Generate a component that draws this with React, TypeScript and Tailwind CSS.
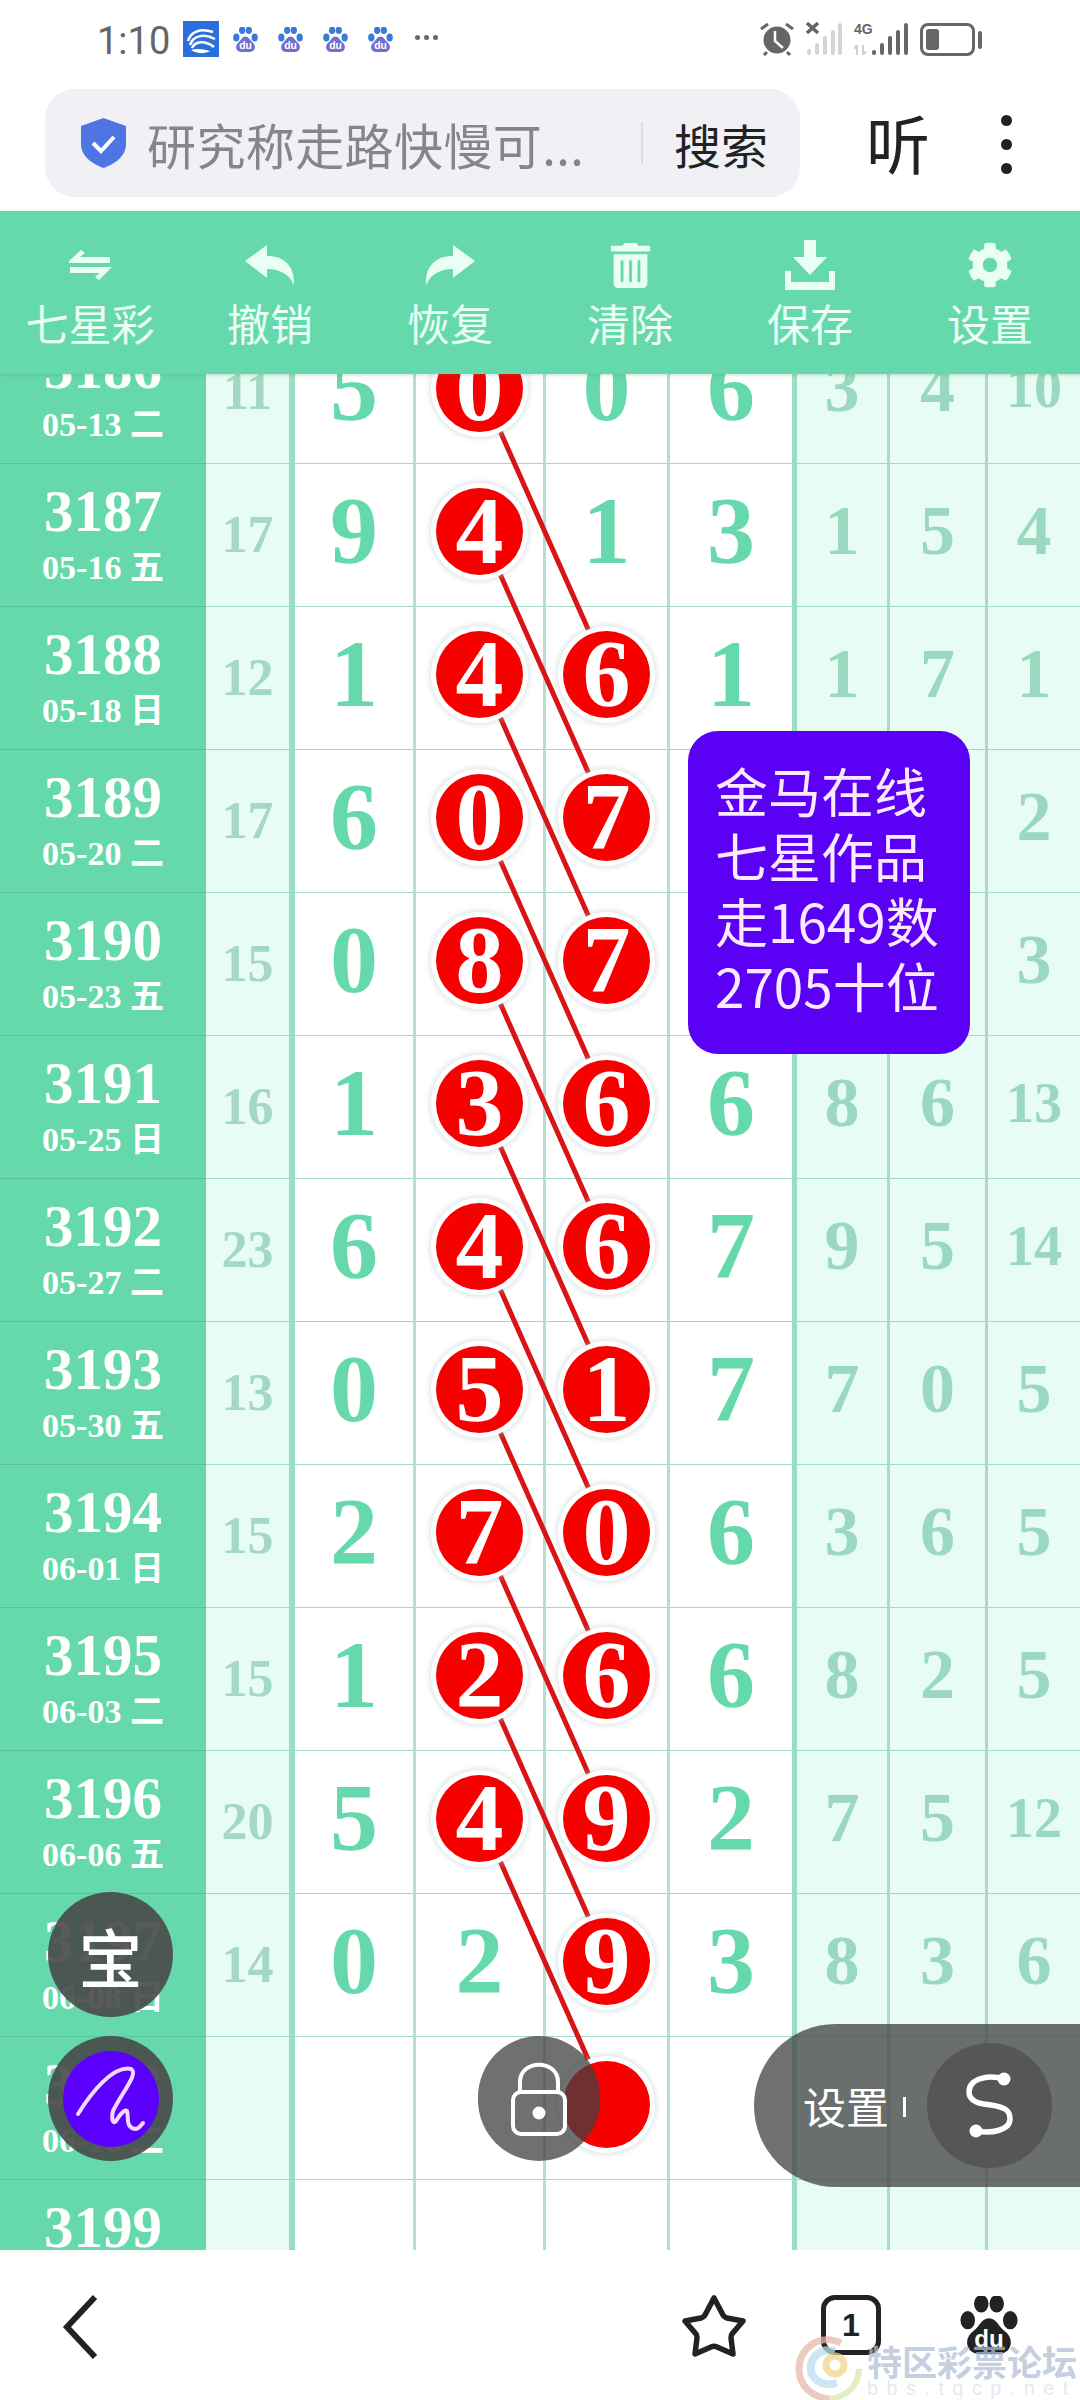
import React from 'react';
import { FaTrashAlt, FaCog } from 'react-icons/fa';

const serif = "font-['Liberation_Serif','Noto_Sans_CJK_SC',serif]";
const ROW_H = 143;
const BALL_OFFSET = 67;

// cells: first, second, third, fourth; a leading "o" marks a drawn ball
const rows = [
  { no: 3186, date: '05-13 二', sum: 11, cells: ['5', 'o0', '0', '6'], tail: [3, 4, 10] },
  { no: 3187, date: '05-16 五', sum: 17, cells: ['9', 'o4', '1', '3'], tail: [1, 5, 4] },
  { no: 3188, date: '05-18 日', sum: 12, cells: ['1', 'o4', 'o6', '1'], tail: [1, 7, 1], thick: true },
  { no: 3189, date: '05-20 二', sum: 17, cells: ['6', 'o0', 'o7', ''], tail: ['', '', 2] },
  { no: 3190, date: '05-23 五', sum: 15, cells: ['0', 'o8', 'o7', ''], tail: ['', '', 3] },
  { no: 3191, date: '05-25 日', sum: 16, cells: ['1', 'o3', 'o6', '6'], tail: [8, 6, 13] },
  { no: 3192, date: '05-27 二', sum: 23, cells: ['6', 'o4', 'o6', '7'], tail: [9, 5, 14], thick: true },
  { no: 3193, date: '05-30 五', sum: 13, cells: ['0', 'o5', 'o1', '7'], tail: [7, 0, 5] },
  { no: 3194, date: '06-01 日', sum: 15, cells: ['2', 'o7', 'o0', '6'], tail: [3, 6, 5] },
  { no: 3195, date: '06-03 二', sum: 15, cells: ['1', 'o2', 'o6', '6'], tail: [8, 2, 5] },
  { no: 3196, date: '06-06 五', sum: 20, cells: ['5', 'o4', 'o9', '2'], tail: [7, 5, 12], thick: true },
  { no: 3197, date: '06-08 日', sum: 14, cells: ['0', '2', 'o9', '3'], tail: [8, 3, 6] },
  { no: 3198, date: '06-10 二', sum: '', cells: ['', '', 'o', ''], tail: ['', '', ''] },
  { no: 3199, date: '06-13 五', sum: '', cells: ['', '', '', ''], tail: ['', '', ''] },
];

const tools = [
  { label: '七星彩', icon: <SwapIcon /> },
  { label: '撤销', icon: <ReplyIcon /> },
  { label: '恢复', icon: <ReplyIcon flip /> },
  { label: '清除', icon: <FaTrashAlt size={45} /> },
  { label: '保存', icon: <DownloadIcon /> },
  { label: '设置', icon: <FaCog size={46} /> },
];

function SwapIcon() {
  return (
    <svg width="42" height="30" viewBox="0 0 42 30" fill="currentColor">
      <path d="M0 11 L12 0 L16 3 L11 7 H41 V13 H0 Z" />
      <path d="M42 18 L30 30 L26 27 L31 23 H1 V17 H42 Z" />
    </svg>
  );
}

function ReplyIcon({ flip }: { flip?: boolean }) {
  return (
    <svg className={flip ? '-scale-x-100' : ''} width="50" height="40" viewBox="0 0 50 40" fill="currentColor">
      <path d="M0 16 L22 0 V11 C40 11 50 22 49 40 C44 29 35 24 22 24 V33 Z" />
    </svg>
  );
}

function DownloadIcon() {
  return (
    <svg width="50" height="50" viewBox="0 0 50 50" fill="currentColor">
      <path d="M19 0 H31 V17 H42 L25 35 L8 17 H19 Z" />
      <path d="M0 31 H6 V42 H44 V31 H50 V50 H0 Z" />
    </svg>
  );
}

function Paw({ size, color, badge }: { size: number; color: string; badge: string }) {
  return (
    <svg width={size} height={size} viewBox="0 0 60 60">
      <ellipse cx="8" cy="25" rx="7.5" ry="9.5" fill={color} />
      <ellipse cx="22" cy="8" rx="7.5" ry="9" fill={color} />
      <ellipse cx="38" cy="8" rx="7.5" ry="9" fill={color} />
      <ellipse cx="52" cy="25" rx="7.5" ry="9.5" fill={color} />
      <path d="M30 23 C38 23 40 32 47 37 C57 45 53 60 40 60 H20 C7 60 3 45 13 37 C20 32 22 23 30 23 Z" fill={badge} />
      <text x="30" y="53" textAnchor="middle" fontSize="25" fontWeight="700" fill="#fff" fontFamily="Liberation Sans, sans-serif">
        du
      </text>
    </svg>
  );
}

function StatusBar() {
  return (
    <div className="flex h-[89px] items-start pt-[21px] text-[#666]">
      <span className="ml-[97px] w-[86px] font-['Roboto',sans-serif] text-[38px] leading-[40px]">1:10</span>
      <svg width="36" height="36" viewBox="0 0 36 36">
        <rect width="36" height="36" fill="#2a6fdc" />
        <path d="M5 20 C8 10 18 7 30 11 M7 24 C10 15 20 12 32 18 M9 27 C12 20 22 19 31 26" fill="none" stroke="#fff" strokeWidth="2.5" />
        <path d="M8 29 C14 33 22 33 27 30 C20 28 14 27 8 29 Z" fill="#fff" />
      </svg>
      <div className="ml-[14px] mt-[6px] flex gap-[20px]">
        <Paw size={25} color="#3a7ad8" badge="#6f6fd0" />
        <Paw size={25} color="#3a7ad8" badge="#6f6fd0" />
        <Paw size={25} color="#3a7ad8" badge="#6f6fd0" />
        <Paw size={25} color="#3a7ad8" badge="#6f6fd0" />
      </div>
      <div className="ml-[22px] mt-[14px] flex gap-[4px]">
        <span className="h-[5px] w-[5px] rounded-full bg-[#666]" />
        <span className="h-[5px] w-[5px] rounded-full bg-[#666]" />
        <span className="h-[5px] w-[5px] rounded-full bg-[#666]" />
      </div>

      <svg className="ml-[321px] mt-[1px]" width="36" height="34" viewBox="0 0 36 34">
        <circle cx="18" cy="18" r="13.5" fill="#666" />
        <path d="M2 7 L9 2 M34 7 L27 2 M8 30 L5 33 M28 30 L31 33" stroke="#666" strokeWidth="3" />
        <path d="M16 9 V19 L24 26" fill="none" stroke="#fff" strokeWidth="2.5" />
      </svg>
      <svg className="ml-[11px]" width="36" height="35" viewBox="0 0 36 35">
        <path d="M1 2 L12 12 M12 2 L1 12" stroke="#666" strokeWidth="3.5" />
        <g fill="#d4d4d4">
          <rect x="1" y="28" width="4" height="6" rx="2" />
          <rect x="9" y="22" width="4" height="12" rx="2" />
          <rect x="17" y="15" width="4" height="19" rx="2" />
          <rect x="25" y="9" width="4" height="25" rx="2" />
          <rect x="32" y="2" width="4" height="32" rx="2" />
        </g>
      </svg>
      <div className="relative ml-[12px] h-[35px] w-[54px]">
        <span className="absolute left-0 top-[1px] font-['Liberation_Sans',sans-serif] text-[14px] font-bold leading-[14px]">4G</span>
        <svg className="absolute left-0 top-0" width="54" height="35" viewBox="0 0 54 35">
          <path d="M3 24 V34 M3 24 L0 28 M9 24 V34 M9 34 L12 30" stroke="#d0d0d0" strokeWidth="2" fill="none" />
          <g fill="#666">
            <rect x="18" y="29" width="4" height="5" rx="2" />
            <rect x="26" y="22" width="4" height="12" rx="2" />
            <rect x="34" y="15" width="4" height="19" rx="2" />
            <rect x="42" y="9" width="4" height="25" rx="2" />
            <rect x="50" y="2" width="4" height="32" rx="2" />
          </g>
        </svg>
      </div>
      <div className="ml-[12px] mt-[2px] flex items-center gap-[3px]">
        <div className="h-[33px] w-[55px] rounded-[8px] border-[3px] border-[#666] p-[3px]">
          <div className="h-full w-[13px] rounded-[3px] bg-[#666]" />
        </div>
        <div className="h-[18px] w-[4px] rounded-[2px] bg-[#666]" />
      </div>
    </div>
  );
}

function UrlBar() {
  return (
    <div className="flex h-[122px] items-start">
      <div className="ml-[45px] flex h-[108px] w-[755px] items-center rounded-[30px] bg-[#f1f1f5]">
        <svg className="ml-[36px]" width="45" height="50" viewBox="0 0 45 50">
          <path d="M22.5 0 L45 8 V26 C45 38 34 46 22.5 50 C11 46 0 38 0 26 V8 Z" fill="#4f74e3" />
          <path d="M12 25 L20 33 L33 19" fill="none" stroke="#fff" strokeWidth="4" />
        </svg>
        <span className="ml-[21px] w-[494px] text-[49px] leading-none tracking-[0.4px] whitespace-nowrap text-[#85858d]">研究称走路快慢可...</span>
        <div className="h-[42px] w-[2px] bg-[#dcdce0]" />
        <span className="ml-[31px] text-[47px] leading-none text-[#222]">搜索</span>
      </div>
      <span className="ml-[66px] mt-[20px] text-[64px] leading-none text-[#222]">听</span>
      <div className="ml-[71px] mt-[26px] flex flex-col gap-[13px]">
        <span className="h-[11px] w-[11px] rounded-full bg-[#222]" />
        <span className="h-[11px] w-[11px] rounded-full bg-[#222]" />
        <span className="h-[11px] w-[11px] rounded-full bg-[#222]" />
      </div>
    </div>
  );
}

function Toolbar() {
  return (
    <div className="relative z-20 grid h-[163px] grid-cols-6 bg-[#66d9ac] text-[#e9fff6] shadow-[0_1px_3px_rgba(60,140,110,0.3)]">
      {tools.map((t) => (
        <div key={t.label} className="flex flex-col items-center pt-[28px]">
          <div className="flex h-[52px] items-center">{t.icon}</div>
          <span className="mt-[10px] text-[43px] leading-none whitespace-nowrap">{t.label}</span>
        </div>
      ))}
    </div>
  );
}

function Ball({ value }: { value: string }) {
  return (
    <div className="relative z-10 flex h-[87px] w-[87px] items-center justify-center rounded-full bg-[#f60000] text-white shadow-[0_0_0_5px_#fff,0_0_5px_7px_rgba(170,200,195,0.4)]">
      {value}
    </div>
  );
}

function Row({ row }: { row: (typeof rows)[number] }) {
  const edge = row.thick ? 'border-b-[7px] border-b-[#9fd8c3]' : 'border-b-[3px] border-b-[#a3d9c5]';
  return (
    <div className={`grid h-[143px] grid-cols-[206px_89px_121px_130px_124px_127px_93px_98px_92px] ${serif} font-bold`}>
      <div className={`flex flex-col items-center gap-[10px] bg-[#66d9ac] pt-[18px] text-white ${row.thick ? 'border-b-[7px] border-b-[#55c297]' : 'border-b-[3px] border-b-[#55c297]'}`}>
        <span className="text-[59px] leading-none">{row.no}</span>
        <span className="text-[34px] leading-none whitespace-nowrap">{row.date}</span>
      </div>
      <div className={`flex items-start justify-center border-r-[6px] border-r-[#9bdcc4] bg-[#e6fcf5] ${edge}`}>
        <span className="flex h-[142px] items-center text-[52px] leading-none text-[#a4d8c3]">{row.sum}</span>
      </div>
      {row.cells.map((c, i) => (
        <div key={i} className={`flex items-start justify-center bg-white text-[96px] leading-none text-[#66d9ac] ${edge} ${i === 3 ? 'border-r-[5px] border-r-[#9bdcc4]' : 'border-r-[3px] border-r-[#b5e0d1]'}`}>
          <span className="flex h-[134px] items-center">{c.startsWith('o') ? <Ball value={c.slice(1)} /> : c}</span>
        </div>
      ))}
      {row.tail.map((c, i) => (
        <div key={i} className={`flex items-start justify-center bg-[#e6fcf5] ${edge} ${i < 2 ? 'border-r-[3px] border-r-[#a8dcc9]' : ''}`}>
          {/* two-digit counts are set smaller so they stay inside the narrow column */}
          <span className={`flex h-[134px] items-center leading-none text-[#9ad8bf] ${Number(c) > 9 ? 'text-[56px]' : 'text-[70px]'}`}>{c}</span>
        </div>
      ))}
    </div>
  );
}

function TrendLines() {
  return (
    <svg className="absolute inset-0" width="1080" height="2002">
      {rows.slice(0, 11).map((_, i) => (
        <line
          key={i}
          x1="481"
          y1={BALL_OFFSET + ROW_H * i}
          x2="608"
          y2={BALL_OFFSET + ROW_H * (i + 2)}
          stroke="#d81414"
          strokeWidth="5"
        />
      ))}
    </svg>
  );
}

function Table() {
  return (
    <div className="h-[1876px] overflow-hidden">
      <div className="relative mt-[-53px]">
        {rows.map((r) => (
          <Row key={r.no} row={r} />
        ))}
        <TrendLines />
      </div>
    </div>
  );
}

function BottomNav() {
  return (
    <div className="relative z-20 flex h-[150px] items-start bg-white pt-[44px] text-[#222]">
      <svg className="ml-[62px]" width="38" height="66" viewBox="0 0 38 66">
        <path d="M33 3 L5 33 L33 63" fill="none" stroke="#222" strokeWidth="6" />
      </svg>
      <svg className="ml-[581px]" width="66" height="64" viewBox="0 0 66 64">
        <path
          d="M33 4 L42 21 C43 23 44 23 46 24 L62 27 L51 40 C50 41 50 42 50 44 L52 60 L36 53 C34 52 32 52 30 53 L14 60 L16 44 C16 42 16 41 15 40 L4 27 L20 24 C22 23 23 23 24 21 Z"
          fill="none"
          stroke="#222"
          strokeWidth="5.5"
          strokeLinejoin="round"
        />
      </svg>
      <div className="ml-[74px] mt-[1px] flex h-[60px] w-[60px] items-center justify-center rounded-[14px] border-[5px] border-[#222] font-['Liberation_Sans',sans-serif] text-[32px] font-bold">
        1
      </div>
      <div className="ml-[79px] mt-[2px]">
        <Paw size={58} color="#222" badge="#222" />
      </div>
    </div>
  );
}

function FloatingButtons() {
  return (
    <>
      {/* 宝 shortcut */}
      <div className="absolute left-[48px] top-[1892px] z-30 flex h-[125px] w-[125px] items-center justify-center rounded-full bg-[rgba(72,72,72,0.9)] text-[64px] leading-none font-medium text-white">
        宝
      </div>

      {/* pen shortcut */}
      <div className="absolute left-[48px] top-[2036px] z-30 flex h-[125px] w-[125px] items-center justify-center rounded-full bg-[rgba(72,72,72,0.9)]">
        <svg width="96" height="96" viewBox="0 0 96 96">
          <circle cx="48" cy="48" r="48" fill="#5b00ff" />
          <path d="M15 63 C28 42 50 14 68 18 C76 22 60 40 50 60 C48 68 50 74 53 70 C58 62 62 58 64 60 C66 66 62 76 72 78 C76 78 78 74 80 72" fill="none" stroke="#f6d8ff" strokeWidth="4" strokeLinecap="round" />
        </svg>
      </div>

      {/* screen lock */}
      <div className="absolute left-[478px] top-[2036px] z-30 flex h-[125px] w-[122px] items-center justify-center rounded-full bg-[rgba(64,64,64,0.75)]">
        <svg width="56" height="74" viewBox="0 0 56 74">
          <path d="M9 30 V20 C9 -3 47 -3 47 20 V30" fill="none" stroke="#fff" strokeWidth="4" />
          <rect x="2" y="30" width="52" height="42" rx="8" fill="none" stroke="#fff" strokeWidth="4" />
          <circle cx="28" cy="51" r="6.5" fill="#fff" />
        </svg>
      </div>

      {/* settings pill, docked on the right edge */}
      <div className="absolute left-[754px] top-[2024px] z-30 flex h-[163px] w-[326px] items-center rounded-l-[82px] bg-[rgba(64,64,64,0.75)] text-white">
        <span className="ml-[49px] text-[43px] leading-none">设置</span>
        <span className="ml-[14px] mt-[2px] h-[20px] w-[3px] bg-white" />
        <div className="ml-[21px] flex h-[125px] w-[125px] items-center justify-center rounded-full bg-[#565656]">
          <svg width="125" height="125" viewBox="0 0 125 125">
            <path d="M77 36 C60 31 42 36 42 49 C42 60 56 61 64 62 C76 64 83 66 83 76 C83 87 65 91 49 88" fill="none" stroke="#fff" strokeWidth="5.5" />
            <circle cx="77" cy="36" r="6.5" fill="#fff" />
            <circle cx="49" cy="88" r="6.5" fill="#fff" />
          </svg>
        </div>
      </div>

      {/* author note */}
      <div className="absolute left-[688px] top-[731px] z-30 h-[323px] w-[282px] rounded-[30px] bg-[#5a00f5] pl-[27px] pt-[27px] text-[53px] leading-[65px] whitespace-nowrap text-[#fbeaff]">
        <div>金马在线</div>
        <div>七星作品</div>
        <div>走1649数</div>
        <div>2705十位</div>
      </div>

      {/* forum watermark */}
      <div className="absolute left-[795px] top-[2335px] z-40 flex h-[65px] w-[285px] overflow-hidden opacity-75">
        <svg className="shrink-0" width="68" height="65" viewBox="0 0 68 65" fill="none">
          <path d="M46 8 C26 -2 4 12 4 34 C4 50 16 62 34 64" stroke="#e8b9ad" strokeWidth="7" />
          <path d="M34 64 C52 62 64 50 64 34" stroke="#d8e8b0" strokeWidth="6" />
          <path d="M40 16 C24 12 14 24 16 36 C18 46 30 52 42 48" stroke="#b9dff0" strokeWidth="8" />
          <circle cx="40" cy="30" r="9" stroke="#f4d48c" strokeWidth="7" />
        </svg>
        <div className="ml-[4px] font-bold text-[#b3bfd6]">
          <div className="mt-[8px] text-[35px] leading-[36px] whitespace-nowrap">特区彩票论坛</div>
          <div className="font-['Liberation_Sans',sans-serif] text-[20px] leading-[18px] font-normal tracking-[0.42em] whitespace-nowrap text-[#dde2ee]">bbs.tqcp.net</div>
        </div>
      </div>
    </>
  );
}

export default function App() {
  return (
    <div className="relative flex h-[2400px] w-[1080px] flex-col overflow-hidden bg-white font-['Noto_Sans_CJK_SC','Noto_Sans',sans-serif]">
      <StatusBar />
      <UrlBar />
      <Toolbar />
      <Table />
      <BottomNav />
      <FloatingButtons />
    </div>
  );
}
